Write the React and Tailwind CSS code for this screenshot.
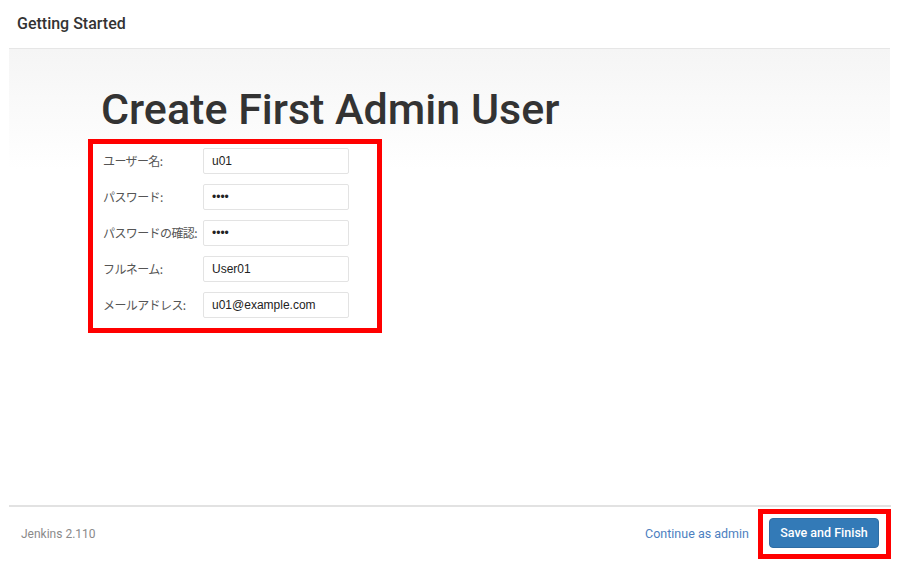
import React from "react";

const rows = [
  { label: "ユーザー名:", value: "u01", type: "text" },
  { label: "パスワード:", value: "abcd", type: "password" },
  { label: "パスワードの確認:", value: "abcd", type: "password" },
  { label: "フルネーム:", value: "User01", type: "text" },
  { label: "メールアドレス:", value: "u01@example.com", type: "text" },
];

export default function App() {
  return (
    <div className="w-[916px] h-[576px] bg-white overflow-hidden font-['Roboto',sans-serif]">
      <div className="ml-[9px] w-[881px] h-full flex flex-col">
        <div className="h-[49px] border-b border-[#e6e6e6] flex items-center pl-[8px]">
          <span className="text-[16px] font-medium text-[#333]">Getting Started</span>
        </div>
        <div className="h-[456px] flex flex-col pl-[79px] bg-[linear-gradient(to_bottom,#f5f5f5,#ffffff_120px)]">
          <h1 className="mt-[36px] ml-[13px] text-[43px] leading-[48px] font-medium text-[#333]">
            Create First Admin User
          </h1>
          <div className="mt-[6px] w-[294px] border-[5px] border-[#ff0000] bg-white pl-[10px] pr-[28px] pt-[4px] pb-[10px] flex flex-col gap-[10px]">
            {rows.map((r) => (
              <div key={r.label} className="flex items-center h-[26px]">
                <div className="w-[100px] text-[12px] text-[#555] font-['Noto_Sans_CJK_JP',sans-serif] tracking-[-0.6px] whitespace-nowrap">
                  {r.label}
                </div>
                <input
                  type={r.type}
                  readOnly
                  value={r.value}
                  className="w-[146px] h-[26px] border border-[#e3e3e3] rounded-[2px] bg-white px-[8px] text-[12px] text-[#222] font-['Liberation_Sans',Arial,sans-serif] outline-none"
                />
              </div>
            ))}
          </div>
        </div>
        <div className="border-t-2 border-[#e2e2e2] h-[56px] flex items-center pl-[12px] w-[882px]">
          <span className="text-[12px] text-[#8a8a8a]">Jenkins 2.110</span>
          <div className="flex-1" />
          <span className="text-[12.5px] text-[#4d7fbf]">Continue as admin</span>
          <div className="ml-[9px] border-[5px] border-[#ff0000] pl-[6px] pr-[7px] pt-[4px] pb-[6px]">
            <button className="w-[110px] h-[30px] rounded-[4px] bg-[#337ab7] border border-[#2e6da4] text-white text-[12.5px] font-medium">
              Save and Finish
            </button>
          </div>
        </div>
      </div>
    </div>
  );
}
